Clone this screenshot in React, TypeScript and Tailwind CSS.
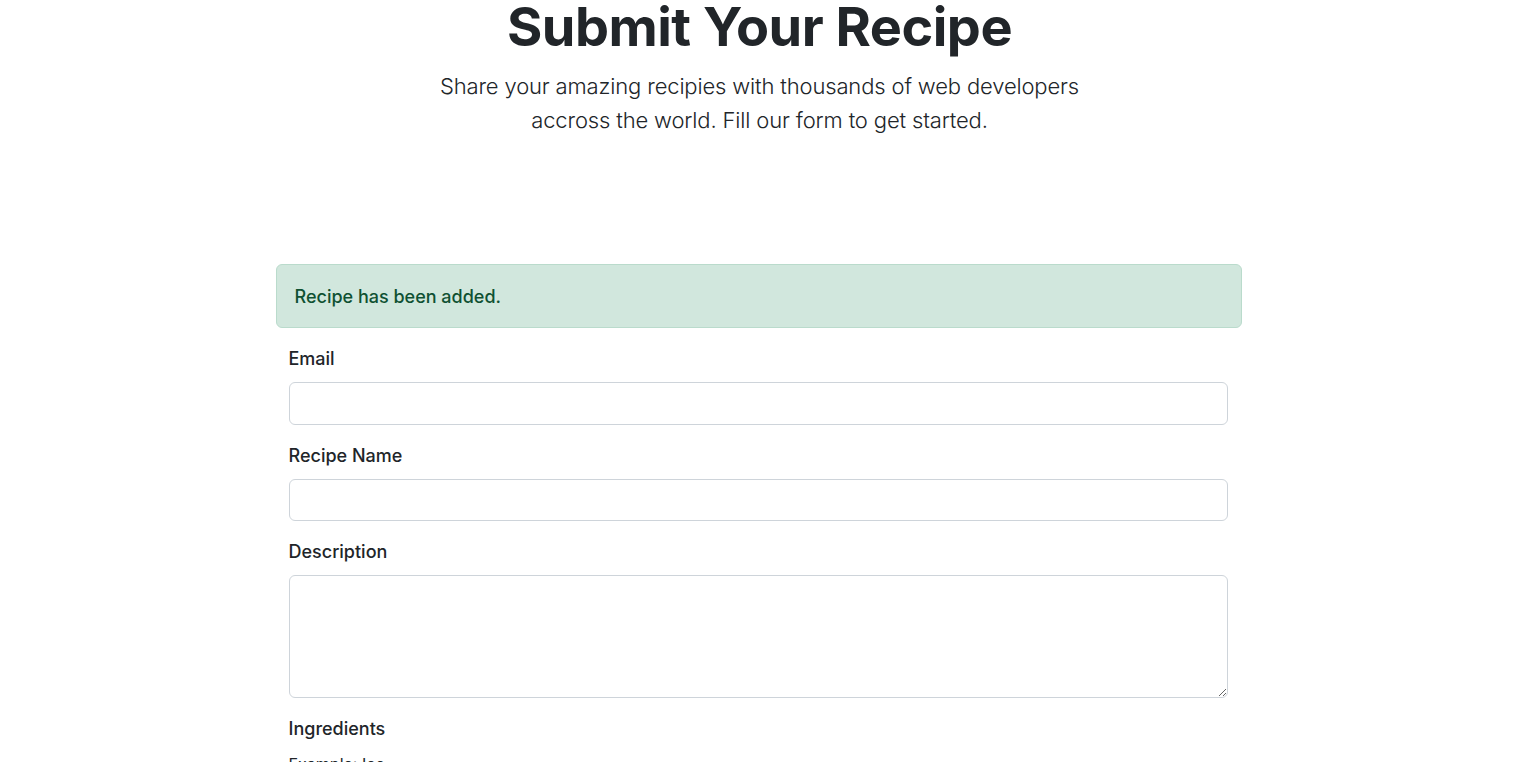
import React from "react";

export default function App() {
  const font = { fontFamily: "Inter, 'Noto Sans', sans-serif" };
  return (
    <div className="min-h-screen bg-white text-[#212529]" style={font}>
      <header className="flex flex-col items-center text-center">
        <h1 className="text-[54px] font-bold leading-[54px] tracking-[-0.5px]">
          Submit Your Recipe
        </h1>
        <p className="mt-[15px] text-[22px] font-light leading-[34px] tracking-[-0.15px]">
          <span className="block">Share your amazing recipies with thousands of web developers</span>
          <span className="block">accross the world. Fill our form to get started.</span>
        </p>
      </header>

      <main className="mx-auto mt-[127px] w-[968px] pr-[2px]">
        <div className="flex h-[64px] items-center rounded-[6px] border border-[#badbcc] bg-[#d1e7dd] pl-[18px] text-[18px] font-medium text-[#0f5132]">
          Recipe has been added.
        </div>

        <form className="mt-[17px] flex flex-col pl-[13px] pr-[14px]">
          <div className="mb-[17px] flex flex-col">
            <label className="mb-[10px] text-[18px] font-medium leading-[27px]">Email</label>
            <input type="email" className="h-[43px] rounded-[6px] border border-[#ced4da] bg-white px-3 outline-none" />
          </div>
          <div className="mb-[17px] flex flex-col">
            <label className="mb-[10px] text-[18px] font-medium leading-[27px]">Recipe Name</label>
            <input type="text" className="h-[42px] rounded-[6px] border border-[#ced4da] bg-white px-3 outline-none" />
          </div>
          <div className="mb-[17px] flex flex-col">
            <label className="mb-[10px] text-[18px] font-medium leading-[27px]">Description</label>
            <textarea className="h-[123px] rounded-[6px] border border-[#ced4da] bg-white px-3 py-2 outline-none" />
          </div>
          <div className="flex flex-col">
            <label className="text-[18px] font-medium leading-[27px]">Ingredients</label>
            <small className="mt-[10px] text-[16px] leading-[24px]">Example: Ice</small>
            <input type="text" className="mt-2 h-[43px] rounded-[6px] border border-[#ced4da] bg-white px-3 outline-none" />
          </div>
        </form>
      </main>
    </div>
  );
}
